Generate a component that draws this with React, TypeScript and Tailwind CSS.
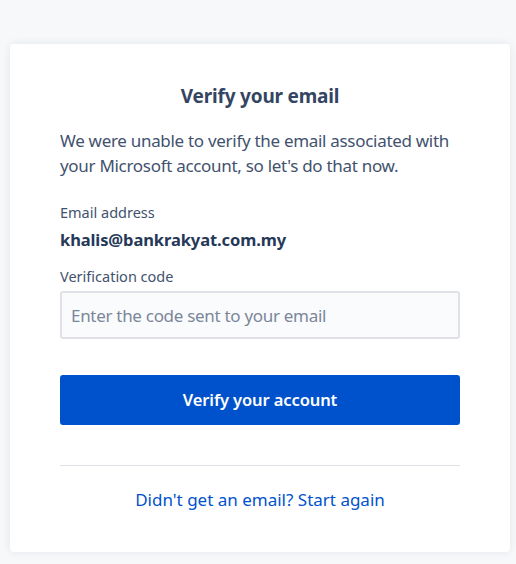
export default function App() {
  return (
    <div className="min-h-[564px] bg-[#f7f8fa] pt-[44px] pl-[10px]" style={{ fontFamily: '"Noto Sans", "Open Sans", sans-serif' }}>
      <div className="w-[500px] rounded-[4px] bg-white px-[50px] pt-[40px] pb-[40px] shadow-[0_0_10px_rgba(9,30,66,0.08)]">
        <h1 className="text-center text-[19px] leading-[24px] font-bold tracking-[-0.2px] text-[#344563]">
          Verify your email
        </h1>
        <p className="mt-[20px] text-[17px] leading-[25px] tracking-[-0.3px] text-[#42526e]">
          We were unable to verify the email associated with
          <br />
          your Microsoft account, so let's do that now.
        </p>
        <div className="mt-[24px] text-[14.5px] leading-[20px] text-[#42526e]">Email address</div>
        <div className="mt-[6px] text-[16.5px] leading-[24px] font-bold tracking-[-0.1px] text-[#253858]">
          khalis@bankrakyat.com.my
        </div>
        <label className="mt-[14px] block text-[14.5px] leading-[20px] text-[#42526e]">
          Verification code
        </label>
        <input
          type="text"
          placeholder="Enter the code sent to your email"
          className="mt-[5px] block h-[48px] w-full rounded-[3px] border-2 border-[#dfe1e6] bg-[#fafbfc] px-[9px] text-[17px] tracking-[-0.3px] text-[#172b4d] outline-none placeholder:text-[#7a869a]"
        />
        <button className="mt-[36px] flex h-[50px] w-full items-center justify-center rounded-[3px] bg-[#0052cc] text-[16.5px] font-semibold tracking-[-0.1px] text-white">
          Verify your account
        </button>
        <div className="mt-[40px] h-px w-full bg-[#dfe1e6]" />
        <div className="mt-[22px] text-center text-[17px] leading-[24px]">
          <a href="#" className="text-[#0052cc]">Didn't get an email? Start again</a>
        </div>
      </div>
    </div>
  );
}
